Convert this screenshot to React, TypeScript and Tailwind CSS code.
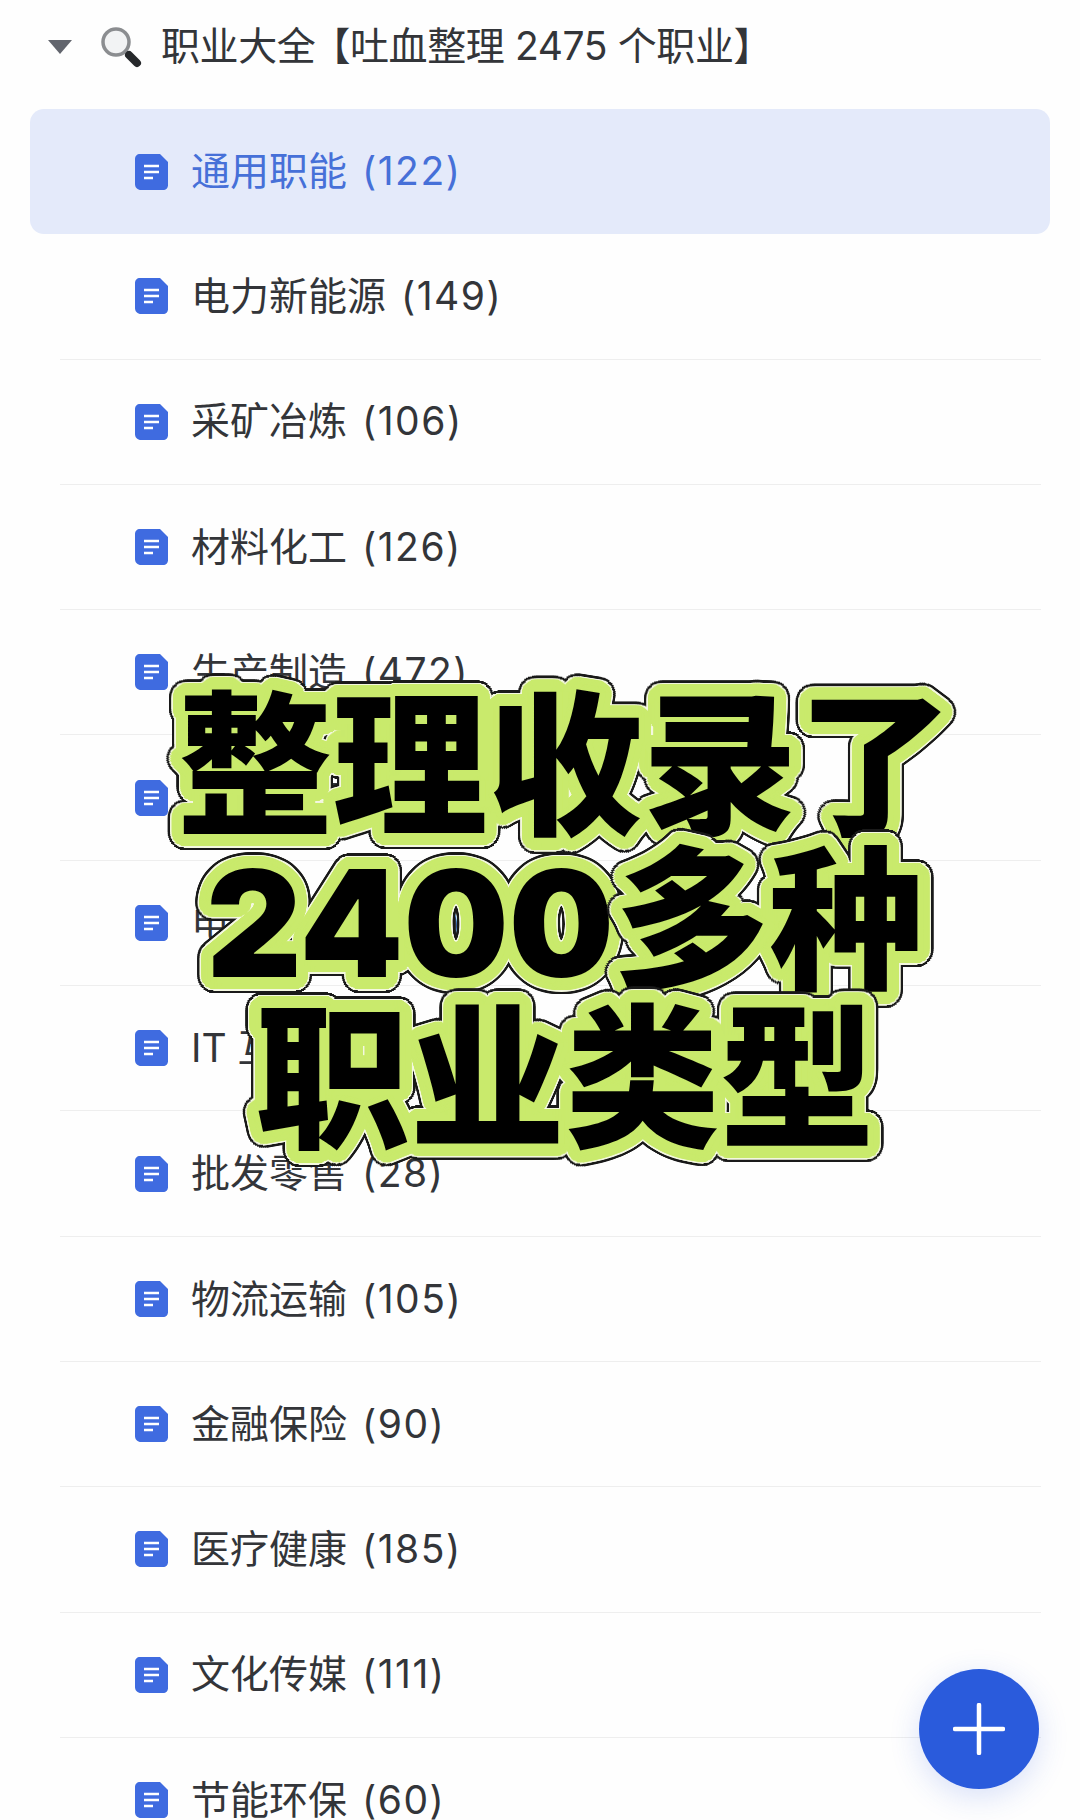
const rows = [
  ["通用职能", "(122)"],
  ["电力新能源", "(149)"],
  ["采矿冶炼", "(106)"],
  ["材料化工", "(126)"],
  ["生产制造", "(472)"],
  ["建筑房产", "(150)"],
  ["电子电气", "(130)"],
  ["IT 互联网", "(240)"],
  ["批发零售", "(28)"],
  ["物流运输", "(105)"],
  ["金融保险", "(90)"],
  ["医疗健康", "(185)"],
  ["文化传媒", "(111)"],
  ["节能环保", "(60)"],
];

// round halo around the sticker text: text-stroke only does miter corners
function ring(radius: number, color: string) {
  const out: string[] = [];
  for (let a = 0; a < 48; a++) {
    const x = (Math.cos((a * Math.PI) / 24) * radius).toFixed(1);
    const y = (Math.sin((a * Math.PI) / 24) * radius).toFixed(1);
    out.push(`${x}px ${y}px 0 ${color}`);
  }
  return out;
}

const halo = [
  ...ring(6, "#c9ea6c"),
  ...ring(12, "#c9ea6c"),
  ...ring(13.5, "#f4f8e0"),
  ...ring(16, "#1a1a1a"),
].join(",");

function DocIcon() {
  return (
    <svg width="33" height="36" viewBox="0 0 33 36" className="shrink-0">
      <path d="M5 0H25L33 8V31C33 34 31 36 28 36H6C2.500 36 0 33.500 0 30V5C0 2 2 0 5 0Z" fill="#3f6be0" />
      <path d="M9 12H24M9 18H24M9 24H18" stroke="#fff" strokeWidth="2.400" fill="none" />
    </svg>
  );
}

function Magnifier() {
  return (
    <svg width="44" height="42" viewBox="0 0 44 42" className="shrink-0">
      <circle cx="17" cy="16" r="13" fill="#f2f3f4" stroke="#8b8d90" strokeWidth="3.500" />
      <path d="M27 26L30 29" stroke="#8b8d90" strokeWidth="4" />
      <path d="M30 29L38 37" stroke="#26282b" strokeWidth="8" strokeLinecap="round" />
    </svg>
  );
}

export default function App() {
  return (
    <div className="relative h-[1820px] w-[1080px] overflow-hidden bg-[#fefefe] font-['Inter','Noto_Sans_CJK_SC',sans-serif] text-[39px] text-[#333539]">
      <header className="flex h-[109px] items-center pb-[16px] pl-[48px]">
        <svg width="24" height="14" viewBox="0 0 24 14" className="shrink-0">
          <path d="M0 0H24L12 14Z" fill="#62656d" />
        </svg>
        <div className="ml-[27px]">
          <Magnifier />
        </div>
        <h1 className="ml-[18px] whitespace-nowrap text-[39px] font-normal tracking-[-0.4px]">
          职业大全<span className="ml-[-4px]">【吐血整理 2475 个职业】</span>
        </h1>
      </header>

      <ul>
        {rows.map(([name, count], i) => (
          <li
            key={name}
            className={i === 0 ? "mx-[30px] h-[125.300px] rounded-[14px] bg-[#e4eafa] text-[#4670d8]" : "mx-[30px] h-[125.300px]"}
          >
            <div className={i === 0 ? "ml-[30px] mr-[9px] flex h-full items-center pl-[75px]" : "ml-[30px] mr-[9px] flex h-full items-center border-b border-[#eeeeee] pl-[75px]"}>
              <DocIcon />
              <span className="ml-[23px] whitespace-nowrap">{name}</span>
              <span className="ml-[15px] whitespace-nowrap tracking-[1.5px]">{count}</span>
            </div>
          </li>
        ))}
      </ul>

      <div
        style={{ textShadow: halo }}
        className="absolute left-0 top-[688px] w-[1130px] text-center font-['Inter','Noto_Sans_CJK_SC',sans-serif] text-[155px] font-black leading-[155px] text-black"
      >
        <p>整理收录了</p>
        <p>
          <span className="text-[148px]">2400</span>多种
        </p>
        <p>职业类型</p>
      </div>

      <button
        type="button"
        className="absolute left-[919px] top-[1669px] flex size-[120px] items-center justify-center rounded-full bg-[#2a5bdc] shadow-[0_8px_30px_rgba(42,91,220,0.18)]"
      >
        <svg width="52" height="52" viewBox="0 0 52 52">
          <path d="M26 2V50M2 26H50" stroke="#fff" strokeWidth="4.500" strokeLinecap="round" />
        </svg>
      </button>
    </div>
  );
}
